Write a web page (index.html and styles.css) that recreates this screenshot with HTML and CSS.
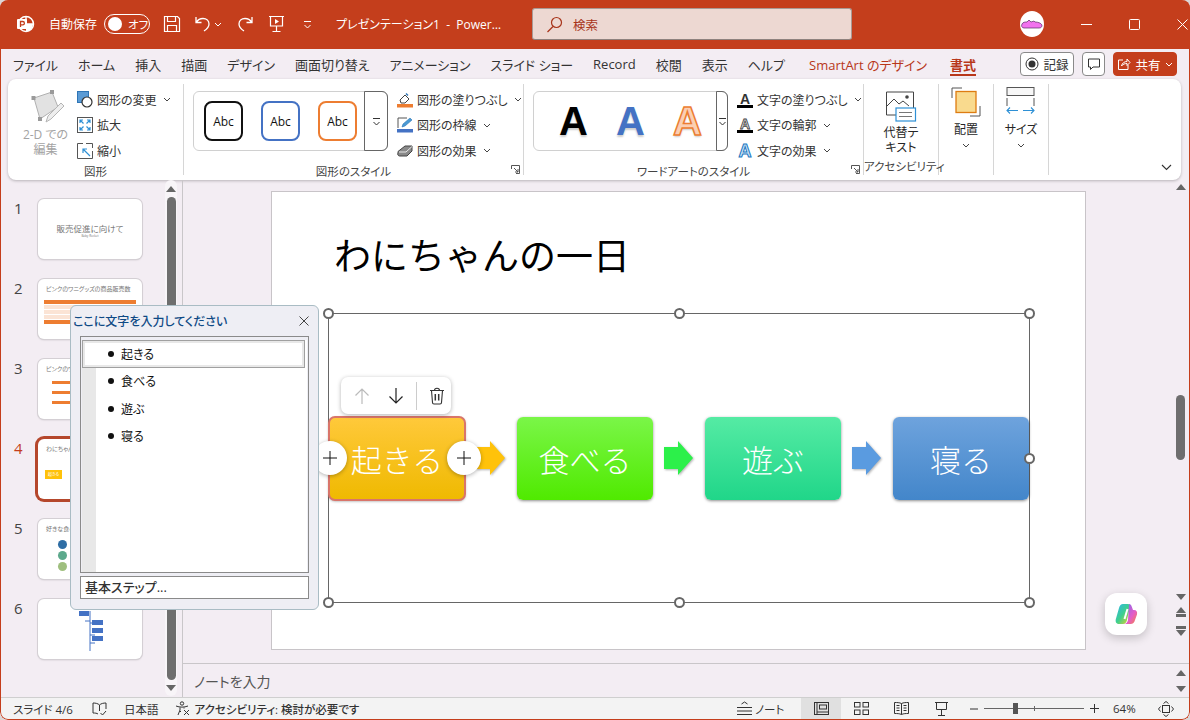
FILE: index.html
```html
<!DOCTYPE html>
<html lang="ja">
<head>
<meta charset="utf-8">
<title>PowerPoint</title>
<link rel="stylesheet" href="styles.css">
</head>
<body>
<div class="app">
  <header class="titlebar">
    <svg class="logo" width="20" height="20" viewBox="0 0 20 20"><circle cx="11" cy="10" r="7.5" fill="none" stroke="#fff" stroke-width="1.5"/><path d="M11 2.5V10h7.5" fill="none" stroke="#fff" stroke-width="1.5"/><path d="M11 10h7a7.5 7.5 0 0 1-7 7.5z" fill="#fff"/><rect x="2" y="5" width="10" height="10" rx="1" fill="#fff"/><path d="M5.5 13V7.5h2.2a1.6 1.6 0 0 1 0 3.4H5.5" fill="none" stroke="#c43e1c" stroke-width="1.3"/></svg>
    <span class="autosave">自動保存</span>
    <span class="toggle"><i class="knob"></i><span>オフ</span></span>
    <svg class="qat save" width="18" height="18" viewBox="0 0 18 18" fill="none" stroke="#fff" stroke-width="1.2"><path d="M1.5 1.5h13l2 2v13h-15zM4.5 1.5v5h8v-5M4.5 16.5v-6h9v6"/></svg>
    <svg class="qat undo" width="18" height="18" viewBox="0 0 18 18" fill="none" stroke="#fff" stroke-width="1.3"><path d="M2 2v5.500h5.500M2.300 7.300C4 4.500 6 3.500 9 3.500c3.500 0 6 2.300 6 5.500 0 2.500-2 5-5 7"/></svg>
    <svg class="chev undochev" width="8" height="5" viewBox="0 0 8 5" fill="none" stroke="#fff"><path d="M1 1l3 3 3-3"/></svg>
    <svg class="qat redo" width="18" height="18" viewBox="0 0 18 18" fill="none" stroke="#fff" stroke-width="1.3"><path d="M16 2v5.500h-5.500M15.700 7.300C14 4.500 12 3.500 9 3.500c-3.500 0-6 2.300-6 5.500 0 2.500 2 5 5 7"/></svg>
    <svg class="qat present" width="18" height="18" viewBox="0 0 18 18" fill="none" stroke="#fff" stroke-width="1.2"><path d="M1 1.500h15M2.500 1.500v9.500h12V1.500M8.500 11v5M4.500 16.500h8"/><path d="M7 4l4 2.500L7 9z" fill="#fff" stroke="none"/></svg>
    <svg class="qatmore" width="9" height="9" viewBox="0 0 9 9" fill="none" stroke="#fff"><path d="M1 1.500h7M1.500 5l3 3 3-3"/></svg>
    <span class="doc">プレゼンテーション1 &nbsp;-&nbsp; Power…</span>
    <div class="search">
      <svg width="17" height="17" viewBox="0 0 17 17" fill="none" stroke="#a8341a" stroke-width="1.2"><circle cx="10.500" cy="6.500" r="5"/><path d="M7 10.500L1.500 16"/></svg>
      <span>検索</span>
    </div>
    <div class="avatar"><svg width="22" height="10" viewBox="0 0 22 10"><path d="M1 5c1-2 3-2 5-2l2-2 2 2 3-1 1 1c3 0 6 1 7 3 0 2-1 3-3 3H3C1 9 0 7 1 5z" fill="#f272ee" stroke="#5a2a66" stroke-width=".7"/></svg></div>
    <svg class="win wmin" width="11" height="11" viewBox="0 0 11 11" stroke="#fff"><path d="M0 5.500h11"/></svg>
    <svg class="win wmax" width="11" height="11" viewBox="0 0 11 11" fill="none" stroke="#fff"><rect x=".5" y=".5" width="10" height="10" rx="1"/></svg>
    <svg class="win wclose" width="11" height="11" viewBox="0 0 11 11" stroke="#fff"><path d="M.5.5l10 10M10.500.5l-10 10"/></svg>
  </header>

  <nav class="tabs">
    <span>ファイル</span><span>ホーム</span><span>挿入</span><span>描画</span><span>デザイン</span><span>画面切り替え</span><span>アニメーション</span><span>スライド ショー</span><span class="latin">Record</span><span>校閲</span><span>表示</span><span>ヘルプ</span>
    <span class="tab-red">SmartArt のデザイン</span><span class="tab-active">書式</span>
    <div class="tab-actions">
      <button class="tbtn rec"><svg width="14" height="14" viewBox="0 0 14 14"><circle cx="7" cy="7" r="6" fill="none" stroke="#333"/><circle cx="7" cy="7" r="3.500" fill="#333"/></svg>記録</button>
      <button class="tbtn cmt"><svg width="14" height="14" viewBox="0 0 14 14" fill="none" stroke="#333"><path d="M1.500 2h11v8H6l-2.500 2.500V10h-2z"/></svg></button>
      <button class="tbtn share"><svg width="14" height="14" viewBox="0 0 14 14" fill="none" stroke="#fff"><path d="M6 3H1.500v9.500h9.500V8M4.500 9c.5-3 3-4.500 5.500-4.500V2L13 5.500 10 8.500V6.500C8 6.500 6 7 4.500 9z"/></svg>共有<svg width="8" height="5" viewBox="0 0 8 5" fill="none" stroke="#fff"><path d="M1 1l3 3 3-3"/></svg></button>
    </div>
  </nav>

  <section class="ribbon">
    <div class="group g1">
      <div class="gbody">
        <div class="big disabled edit2d">
          <svg width="36" height="36" viewBox="0 0 36 36"><path d="M6 9l18-6 6 15-18 12z" fill="#e2e2e2" stroke="#b0b0b0"/><g fill="#9a9a9a"><rect x="3.500" y="7" width="4" height="4"/><rect x="22" y="1" width="4" height="4"/><rect x="10" y="28" width="4" height="4"/></g><path d="M18 33l2-6 13-13 3 3-13 13z" fill="#eee" stroke="#b5b5b5"/></svg>
          <span>2-D での<br>編集</span>
        </div>
        <div class="rows">
          <div class="row"><svg width="16" height="17" viewBox="0 0 16 17"><rect x=".5" y=".5" width="11" height="11" fill="#5b9bd5" stroke="#2e75b6"/><circle cx="10" cy="11" r="5" fill="#fff" stroke="#333" stroke-width="1.200"/></svg><span>図形の変更</span><svg class="chev" width="8" height="5" viewBox="0 0 8 5" fill="none" stroke="#444"><path d="M1 1l3 3 3-3"/></svg></div>
          <div class="row"><svg width="16" height="16" viewBox="0 0 16 16" fill="none"><rect x=".5" y=".5" width="15" height="15" stroke="#555"/><path d="M3 3l3.500 3.500M13 3L9.500 6.500M3 13l3.500-3.500M13 13L9.500 9.500M3 6V3h3M10 3h3v3M3 10v3h3M13 10v3h-3" stroke="#2e90d5" stroke-width="1.200"/></svg><span>拡大</span></div>
          <div class="row"><svg width="16" height="16" viewBox="0 0 16 16" fill="none"><path d="M6 .5H.5v15h15V8M9 .5h6.500V5" stroke="#555"/><path d="M13 13L6 6M6 10V6h4" stroke="#2e90d5" stroke-width="1.200"/></svg><span>縮小</span></div>
        </div>
      </div>
      <div class="glabel">図形</div>
    </div>

    <div class="group g2">
      <div class="gbody">
        <div class="gallery">
          <div class="items shape-items"><span class="abc a-black">Abc</span><span class="abc a-blue">Abc</span><span class="abc a-orange">Abc</span></div>
          <div class="more"><svg width="9" height="9" viewBox="0 0 9 9" fill="none" stroke="#333"><path d="M1 1.500h7M1.500 5l3 3 3-3"/></svg></div>
        </div>
        <div class="rows">
          <div class="row"><svg width="16" height="16" viewBox="0 0 16 16"><path d="M3 8l5-5 4 4-4 4H4z" fill="#fff" stroke="#444"/><path d="M9 1.500l2 2" stroke="#2e75b6" stroke-width="1.500"/><rect y="12" width="16" height="3.500" fill="#ed7d31"/></svg><span>図形の塗りつぶし</span><svg class="chev" width="8" height="5" viewBox="0 0 8 5" fill="none" stroke="#444"><path d="M1 1l3 3 3-3"/></svg></div>
          <div class="row"><svg width="16" height="16" viewBox="0 0 16 16"><path d="M1 11V1h9" fill="none" stroke="#555"/><path d="M5 10l1-3 7-6 2 2-7 6z" fill="#4a9ad4" stroke="#2e75b6" stroke-width=".6"/><rect y="12" width="16" height="3.500" fill="#4472c4"/></svg><span>図形の枠線</span><svg class="chev" width="8" height="5" viewBox="0 0 8 5" fill="none" stroke="#444"><path d="M1 1l3 3 3-3"/></svg></div>
          <div class="row"><svg width="16" height="16" viewBox="0 0 16 16"><path d="M1 8.500L8 3h7v5l-5 5H2.500a2 2 0 0 1-1.500-3z" fill="#8a8a8a" stroke="#444"/><path d="M2 9h7l6-5.500" fill="none" stroke="#e8e8e8"/></svg><span>図形の効果</span><svg class="chev" width="8" height="5" viewBox="0 0 8 5" fill="none" stroke="#444"><path d="M1 1l3 3 3-3"/></svg></div>
        </div>
      </div>
      <div class="glabel">図形のスタイル</div>
      <svg class="launcher" width="9" height="9" viewBox="0 0 9 9" fill="none" stroke="#555"><path d="M.5 4V.5h8v8H5M3 3l4 4M7 4v3H4"/></svg>
    </div>

    <div class="group g3">
      <div class="gbody">
        <div class="gallery">
          <div class="items wa-items"><span class="wa wa-black">A</span><span class="wa wa-blue">A</span><span class="wa wa-orange">A</span></div>
          <div class="more"><svg width="9" height="9" viewBox="0 0 9 9" fill="none" stroke="#333"><path d="M1 1.500h7M1.500 5l3 3 3-3"/></svg></div>
        </div>
        <div class="rows">
          <div class="row"><span class="ta ta-plain">A</span><span>文字の塗りつぶし</span><svg class="chev" width="8" height="5" viewBox="0 0 8 5" fill="none" stroke="#444"><path d="M1 1l3 3 3-3"/></svg></div>
          <div class="row"><span class="ta ta-outline">A</span><span>文字の輪郭</span><svg class="chev" width="8" height="5" viewBox="0 0 8 5" fill="none" stroke="#444"><path d="M1 1l3 3 3-3"/></svg></div>
          <div class="row"><span class="ta ta-effect">A</span><span>文字の効果</span><svg class="chev" width="8" height="5" viewBox="0 0 8 5" fill="none" stroke="#444"><path d="M1 1l3 3 3-3"/></svg></div>
        </div>
      </div>
      <div class="glabel">ワードアートのスタイル</div>
      <svg class="launcher" width="9" height="9" viewBox="0 0 9 9" fill="none" stroke="#555"><path d="M.5 4V.5h8v8H5M3 3l4 4M7 4v3H4"/></svg>
    </div>

    <div class="group g4">
      <div class="gbody">
        <div class="big alt">
          <svg width="32" height="32" viewBox="0 0 32 32" fill="none"><path d="M11 24H1.500V1h27v17" stroke="#444"/><path d="M2 15l7-7 5 5 4-3 6 5" stroke="#444"/><circle cx="22" cy="6" r="1.800" fill="#444"/><rect x="11" y="17" width="19.500" height="13" fill="#fff" stroke="#2e90d5" stroke-width="1.200"/><path d="M14 21.500h13M14 25.500h13" stroke="#777"/></svg>
          <span>代替テ<br>キスト</span>
        </div>
      </div>
      <div class="glabel">アクセシビリティ</div>
    </div>

    <div class="group g5">
      <div class="gbody">
        <div class="big arrange">
          <svg width="30" height="30" viewBox="0 0 30 30" fill="none"><path d="M1 11V1h10M29 19v10h-10" stroke="#555"/><rect x="5" y="4.500" width="20" height="21" fill="#f9da8e" stroke="#dd7c12" stroke-width="1.300"/></svg>
          <span>配置</span>
          <svg class="chev" width="8" height="5" viewBox="0 0 8 5" fill="none" stroke="#444"><path d="M1 1l3 3 3-3"/></svg>
        </div>
      </div>
      <div class="glabel"></div>
    </div>

    <div class="group g6">
      <div class="gbody">
        <div class="big arrange">
          <svg width="30" height="30" viewBox="0 0 30 30" fill="none"><rect x="1" y=".5" width="27" height="8" fill="#f7f7f7" stroke="#555"/><path d="M1 11v8M28 11v8" stroke="#555"/><path d="M1 23.500h11M4 20.500l-3 3 3 3M28 23.500H17M25 20.500l3 3-3 3" stroke="#2e90d5" stroke-width="1.100"/></svg>
          <span>サイズ</span>
          <svg class="chev" width="8" height="5" viewBox="0 0 8 5" fill="none" stroke="#444"><path d="M1 1l3 3 3-3"/></svg>
        </div>
      </div>
      <div class="glabel"></div>
    </div>

    <svg class="collapse" width="11" height="7" viewBox="0 0 11 7" fill="none" stroke="#333" stroke-width="1.100"><path d="M1 1l4.500 4.500L10 1"/></svg>
  </section>

  <main class="main">
    <aside class="thumbs">
      <ol class="thumb-list">
        <li class="tl"><span class="num">1</span>
          <div class="thumb t1"><b>販売促進に向けて</b><i>Baby Rocket</i></div></li>
        <li class="tl"><span class="num">2</span>
          <div class="thumb t2"><b>ピンクのワニグッズの商品販売数</b><div class="mini-table"><i class="mt-head"></i><i></i><i></i><i class="mt-alt"></i><i class="mt-foot"></i></div></div></li>
        <li class="tl"><span class="num">3</span>
          <div class="thumb t3"><b>ピンクのワニグッズ</b><div class="mini-bars"><i></i><i></i><i></i></div></div></li>
        <li class="tl current"><span class="num">4</span>
          <div class="thumb t4"><b>わにちゃんの一日</b><div class="mini-node">起きる</div></div></li>
        <li class="tl"><span class="num">5</span>
          <div class="thumb t5"><b>好きな食べ物</b><div class="mini-dots"><i class="d1"></i><i class="d2"></i><i class="d3"></i></div></div></li>
        <li class="tl"><span class="num">6</span>
          <div class="thumb t6">
            <svg width="104" height="60" viewBox="0 0 104 60"><path d="M52 12V52M52 22h-5M52 24h5M52 36h5M52 44h5" stroke="#4472c4" fill="none"/><g fill="#4472c4"><rect x="47" y="2" width="11" height="5"/><rect x="41" y="12" width="10" height="5"/><rect x="54" y="21" width="11" height="5"/><rect x="54" y="29" width="11" height="5"/><rect x="54" y="37" width="11" height="5"/></g></svg>
          </div></li>
      </ol>
      <div class="vscroll left-scroll">
        <span class="tri up"></span><span class="thumbbar"></span><span class="tri down"></span>
      </div>
    </aside>

    <div class="editor">
      <div class="stage">
        <div class="canvas">
          <div class="slide">
            <h1 class="slide-title">わにちゃんの一日</h1>
            <div class="smartart">
              <div class="node n1">起きる</div>
              <svg class="arrow" width="30" height="34" viewBox="0 0 30 34"><path d="M0 6h14V0l15 17-15 17v-6H0z" fill="#ffc20a"/></svg>
              <div class="node n2">食べる</div>
              <svg class="arrow" width="30" height="34" viewBox="0 0 30 34"><path d="M0 6h14V0l15 17-15 17v-6H0z" fill="#2cf04a"/></svg>
              <div class="node n3">遊ぶ</div>
              <svg class="arrow" width="30" height="34" viewBox="0 0 30 34"><path d="M0 6h14V0l15 17-15 17v-6H0z" fill="#5a9be0"/></svg>
              <div class="node n4">寝る</div>
              <span class="handle h-tl"></span><span class="handle h-tc"></span><span class="handle h-tr"></span><span class="handle h-mr"></span><span class="handle h-bl"></span><span class="handle h-bc"></span><span class="handle h-br"></span>
              <div class="plus plus-l"><svg width="16" height="16" viewBox="0 0 16 16" stroke="#111"><path d="M8 1v14M1 8h14"/></svg></div>
              <div class="plus plus-r"><svg width="16" height="16" viewBox="0 0 16 16" stroke="#111"><path d="M8 1v14M1 8h14"/></svg></div>
              <div class="float-tools">
                <svg width="16" height="18" viewBox="0 0 16 18" fill="none" stroke="#bbb" stroke-width="1.200"><path d="M8 17V2M1.500 8.500L8 2l6.500 6.500"/></svg>
                <svg width="16" height="18" viewBox="0 0 16 18" fill="none" stroke="#222" stroke-width="1.200"><path d="M8 1v15M1.500 9.500L8 16l6.500-6.500"/></svg>
                <i class="tsep"></i>
                <svg width="16" height="18" viewBox="0 0 16 18" fill="none" stroke="#333" stroke-width="1.100"><path d="M1 3.500h14M5.500 3.500c0-3 5-3 5 0M2.500 3.500l1 12c0 1 .7 1.500 1.500 1.500h6c.8 0 1.500-.5 1.500-1.500l1-12"/><path d="M6.300 7v6.500M9.700 7v6.500" stroke-width="1.500"/></svg>
              </div>
            </div>
          </div>
          <button class="copilot"><svg width="24" height="24" viewBox="0 0 24 24"><defs><linearGradient id="cpA" x1="0" y1="0" x2="1" y2="1"><stop offset="0" stop-color="#2db5f0"/><stop offset=".5" stop-color="#3ecf8e"/><stop offset="1" stop-color="#f5d020"/></linearGradient><linearGradient id="cpB" x1="0" y1="0" x2="1" y2="1"><stop offset="0" stop-color="#7a6cf0"/><stop offset=".6" stop-color="#e45bc8"/><stop offset="1" stop-color="#f6843c"/></linearGradient></defs><path d="M9 2h5c1.500 0 2 1 2.300 2L13 18c-.5 2-1.500 4-4 4H5C2 22 1 19.500 2 16.500L5 6c.7-2.500 2-4 4-4z" fill="url(#cpA)"/><path d="M15 2c1.500 0 2.300 1 2.700 2.500L19 8h1c2.500 0 3.500 2 3 4.500L21 18c-.7 2.500-2 4-4.500 4H10c2 0 3.300-1.500 4-4z" fill="url(#cpB)"/><path d="M13.500 7l-3 10" stroke="#fff" stroke-width="2"/></svg></button>
        </div>
        <div class="vscroll right-scroll">
          <span class="tri up"></span><span class="track"><span class="thumbbar short"></span></span><span class="tri down"></span>
          <span class="dbl"><span class="tri up"></span><i></i></span><span class="dbl"><i></i><span class="tri down"></span></span>
        </div>
      </div>
      <div class="notes">
        <span>ノートを入力</span>
        <div class="vscroll notes-scroll"><span class="tri up"></span><span class="tri down"></span></div>
      </div>
    </div>

    <div class="textpane">
      <div class="tp-head"><span>ここに文字を入力してください</span>
        <svg width="10" height="10" viewBox="0 0 10 10" stroke="#444"><path d="M.5.500l9 9M9.500.500l-9 9"/></svg>
      </div>
      <ul class="tp-list">
        <li class="sel">起きる</li>
        <li>食べる</li>
        <li>遊ぶ</li>
        <li>寝る</li>
      </ul>
      <div class="tp-foot">基本ステップ...</div>
    </div>
  </main>

  <footer class="status">
    <span>スライド 4/6</span>
    <svg class="st-book" width="15" height="14" viewBox="0 0 15 14" fill="none" stroke="#333"><path d="M7.500 3C6 1.500 3.500 1 1 1v10c2 0 4 .2 5 1M7.500 3c1.500-1.500 4-2 6.500-2v6M7.500 3v6M8.500 11l2 2 3.500-4"/></svg>
    <span class="st-lang">日本語</span>
    <svg class="st-acc" width="15" height="15" viewBox="0 0 15 15" fill="none" stroke="#333"><circle cx="7" cy="2.500" r="1.700"/><path d="M1 5c4 1.500 8 1.500 12 0M5 6.500V9l-2 5M9 6.500v1M6 10l-1 1M9 9l5 5M14 9l-5 5"/></svg>
    <span class="st-msg">アクセシビリティ: 検討が必要です</span>
    <div class="st-right">
      <svg width="17" height="15" viewBox="0 0 17 15" fill="none" stroke="#333"><path d="M5.500 3l3-2 3 2M1 6.500h15M1 10h15M1 13.500h15"/></svg>
      <span class="st-note">ノート</span>
      <div class="view on"><svg width="15" height="13" viewBox="0 0 15 13" fill="none" stroke="#333"><rect x=".5" y=".5" width="14" height="12"/><path d="M3 .5v12M3 10h11"/><rect x="5.500" y="3" width="7" height="4"/></svg></div>
      <div class="view"><svg width="15" height="13" viewBox="0 0 15 13" fill="none" stroke="#333"><rect x=".5" y=".5" width="5.500" height="4.500"/><rect x="9" y=".5" width="5.500" height="4.500"/><rect x=".5" y="8" width="5.500" height="4.500"/><rect x="9" y="8" width="5.500" height="4.500"/></svg></div>
      <div class="view"><svg width="15" height="13" viewBox="0 0 15 13" fill="none" stroke="#333"><path d="M7.500 1.500C5.500.5 3 .5.500.5v11c2.500 0 5 0 7 1 2-1 4.500-1 7-1V.5c-2.500 0-5 0-7 1zM7.500 1.500v11M2.500 3.500h3M2.500 6h3M2.500 8.500h3M9.500 3.500h3M9.500 6h3M9.500 8.500h3"/></svg></div>
      <div class="view"><svg width="15" height="14" viewBox="0 0 15 14" fill="none" stroke="#333"><path d="M1 .5h13M2.500.5v7h10v-7M7.500 7.500v6M4 13.500h7"/></svg></div>
      <div class="zoomer">
        <svg width="8" height="2" viewBox="0 0 8 2" stroke="#333"><path d="M0 1h8"/></svg>
        <div class="slider"><i class="sl-tick"></i><i class="sl-knob"></i></div>
        <svg width="9" height="9" viewBox="0 0 9 9" stroke="#333"><path d="M4.500 0v9M0 4.500h9"/></svg>
      </div>
      <span class="st-zoom">64%</span>
      <svg class="st-fit" width="16" height="16" viewBox="0 0 16 16" fill="none" stroke="#333"><rect x="4.500" y="4.500" width="7" height="7"/><path d="M2.500 5.500L.5 8l2 2.500M13.500 5.500l2 2.500-2 2.500M5.500 2.500L8 .5l2.500 2M5.500 13.500l2.500 2 2.500-2"/></svg>
    </div>
  </footer>
</div>
</body>
</html>
```

FILE: styles.css
```css
* { box-sizing: border-box; }
html, body { margin: 0; padding: 0; }
body {
  width: 1190px; height: 720px; overflow: hidden; background: #dcd6d6;
  font-family: "Open Sans", "Noto Sans CJK JP", sans-serif;
  font-feature-settings: "palt"; color: #262626; font-size: 12px;
}
.app {
  position: relative; width: 1190px; height: 720px; display: flex; flex-direction: column;
  background: #f3edf3; border-radius: 8px; overflow: hidden;
}
.app::after {
  content: ""; position: absolute; inset: 0; border: 1px solid #c43e1c;
  border-top: 0; border-radius: 8px; pointer-events: none;
}
svg { display: block; flex: none; }

/* title bar */
.titlebar { height: 49px; flex: none; background: #c43e1c; display: flex; align-items: center; color: #fff; padding-bottom: 1px; }
.logo { margin-left: 15px; }
.autosave { margin-left: 14px; width: 48px; white-space: nowrap; font-size: 12px; }
.toggle { margin-left: 7px; width: 46px; height: 20px; border: 1px solid #fff; border-radius: 10px; display: flex; align-items: center; padding-left: 3px; gap: 6px; font-size: 11.5px; white-space: nowrap; }
.knob { width: 14px; height: 14px; background: #fff; border-radius: 50%; flex: none; }
.save { margin-left: 13px; }
.undo { margin-left: 13px; }
.undochev { margin-left: 2px; margin-top: 0; }
.redo { margin-left: 14px; }
.present { margin-left: 14px; }
.qatmore { margin-left: 17px; }
.doc { margin-left: 24px; width: 150px; font-size: 12px; white-space: nowrap; }
.search { margin-left: 46px; width: 320px; height: 32px; background: #edd8d2; border: 1px solid #a99a95; border-bottom-color: #8f827e; border-radius: 3px; display: flex; align-items: center; padding-left: 13px; gap: 10px; color: #a8341a; font-size: 12.5px; }
.avatar { margin-left: 168px; width: 24px; height: 26px; border-radius: 50%; background: #fff; display: flex; align-items: center; justify-content: center; }
.avatar svg { margin: 0 -1px; }
.wmin { margin-left: 37px; }
.wmax { margin-left: 37px; }
.wclose { margin-left: 37px; }

/* tabs */
.tabs { height: 30px; flex: none; display: flex; align-items: center; padding-left: 13px; gap: 20px; font-size: 13px; white-space: nowrap; color: #333; }
.tab-red { color: #b8371a; margin-left: 4px; }
.tab-active { color: #b8371a; font-weight: 700; position: relative; margin-left: 3px; }
.tab-active::after { content: ""; position: absolute; left: 0; right: 0; bottom: -2px; height: 2px; background: #b8371a; }
.tab-actions { margin-left: auto; display: flex; gap: 8px; padding-right: 13px; }
.tbtn { height: 24px; border: 1px solid #8a8a8a; border-radius: 4px; background: #fff; display: flex; align-items: center; justify-content: center; gap: 4px; font: inherit; font-size: 12.5px; color: #333; padding: 0; }
.rec { width: 54px; }
.cmt { width: 23px; }
.share { width: 64px; background: #c43e1c; border-color: #c43e1c; color: #fff; }

/* ribbon */
.ribbon { position: relative; flex: none; height: 101px; margin: 0 9px 0 8px; background: #fff; border-radius: 8px; box-shadow: 0 1px 3px rgba(0,0,0,.25); display: flex; padding-top: 5px; }
.group { position: relative; display: flex; flex-direction: column; border-right: 1px solid #d6d6d6; height: 91px; flex: none; }
.gbody { flex: 1; display: flex; }
.glabel { height: 16px; line-height: 16px; text-align: center; font-size: 11.5px; color: #444; white-space: nowrap; margin-bottom: 0; }
.launcher { position: absolute; right: 3px; bottom: 1px; }
.g1 { width: 176px; } .g2 { width: 340px; } .g3 { width: 340px; } .g4 { width: 75px; } .g5 { width: 55px; } .g6 { width: 55px; }
.big { display: flex; flex-direction: column; align-items: center; text-align: center; line-height: 15px; font-size: 12px; }
.edit2d { width: 69px; padding: 5px 0 0 6px; gap: 2px; }
.disabled { color: #a3a3a3; }
.rows { display: flex; flex-direction: column; padding-top: 3px; }
.g1 .rows { margin-left: 0; }
.row { display: flex; align-items: center; height: 25.5px; gap: 4px; white-space: nowrap; font-size: 12px; color: #333; }
.row .chev { margin-left: 2px; }
.gallery { margin: 7px 9px 0 9px; width: 195px; height: 60px; border: 1px solid #d0d0d0; border-radius: 6px; display: flex; }
.items { flex: 1; display: flex; align-items: center; }
.shape-items { padding-left: 10px; gap: 18px; }
.abc { width: 39px; height: 40px; border: 2px solid; border-radius: 8px; display: flex; align-items: center; justify-content: center; font-size: 12px; color: #111; }
.a-black { border-color: #111; } .a-blue { border-color: #4472c4; } .a-orange { border-color: #ed7d31; }
.more { width: 24px; margin: -1px -1px -1px 0; border: 1px solid #666; border-radius: 0 6px 6px 0; display: flex; align-items: center; justify-content: center; }
.wa-items { padding-left: 11px; }
.wa { width: 57px; text-align: center; font: 700 40px/1 "Liberation Sans", sans-serif; text-shadow: 0 2px 2px rgba(0,0,0,.2); }
.wa-items .wa { margin-right: 0; }
.wa-black { color: #000; }
.wa-blue { color: #4472c4; }
.wa-orange { color: #fbcfb3; -webkit-text-stroke: 1.5px #ed7d31; }
.ta { width: 16px; height: 16px; font: 700 14px/14px "Liberation Sans", sans-serif; text-align: center; color: #333; border-bottom: 3px solid #000; overflow: hidden; flex: none; }
.ta-outline { color: #ddd; -webkit-text-stroke: .8px #444; }
.ta-effect { border-bottom: 0; font-size: 18px; line-height: 16px; color: #cfe6f6; -webkit-text-stroke: 1px #1a78c2; }
.alt { width: 100%; padding-top: 7px; }
.alt svg { margin-bottom: 2px; }
.alt span { line-height: 15px; }
.arrange { width: 100%; padding-top: 3px; gap: 3px; }
.arrange span { line-height: 15px; margin-top: 2px; }
.arrange .chev { margin-top: 3px; }
.collapse { position: absolute; right: 9px; bottom: 9px; }

/* main */
.main { position: relative; flex: 1; display: flex; min-height: 0; }
.thumbs { width: 183px; flex: none; position: relative; border-right: 1px solid #c9c6c9; display: flex; }
.thumb-list { list-style: none; margin: 0; padding: 19px 0 0; width: 164px; display: flex; flex-direction: column; gap: 20px; }
.tl { display: flex; height: 60px; }
.num { width: 38px; padding: 0 0 0 14px; font-size: 15px; line-height: 18px; color: #444; }
.current .num { color: #c43e1c; }
.thumb { position: relative; width: 104px; height: 60px; background: #fff; border-radius: 6px; box-shadow: 0 0 0 1px #d4cfd4, 0 1px 2px rgba(0,0,0,.2); overflow: hidden; color: #777; }
.current .thumb { box-shadow: 0 0 0 3px #b5472c; }
.thumb b { display: block; font-weight: 400; white-space: nowrap; }
.t1 b { font-size: 8.5px; text-align: center; margin-top: 23px; }
.t1 i { display: block; font-style: normal; font-size: 3px; text-align: center; }
.t2 b, .t3 b, .t4 b, .t5 b { font-size: 6px; margin: 5px 0 0 8px; }
.mini-table { margin: 6px 6px 0; display: flex; flex-direction: column; }
.mini-table i { height: 5px; background: #fbe4d5; border-top: 1px solid #fff; }
.mt-head, .mt-foot { background: #ed7d31 !important; }
.mini-bars { margin: 8px 14px 0; display: flex; flex-direction: column; gap: 7px; }
.mini-bars i { height: 3px; background: #ed7d31; }
.mini-node { margin: 17px 0 0 7px; width: 17px; height: 9px; background: #ffc20a; color: #fff; font-size: 4px; line-height: 9px; text-align: center; }
.mini-dots { margin: 7px 0 0 20px; display: flex; flex-direction: column; gap: 2px; }
.mini-dots i { width: 9px; height: 9px; border-radius: 50%; }
.d1 { background: #2e6da4; } .d2 { background: #5da98c; } .d3 { background: #9fbf7e; }

.vscroll { display: flex; flex-direction: column; align-items: center; }
.tri { width: 0; height: 0; border-left: 5px solid transparent; border-right: 5px solid transparent; flex: none; }
.tri.up { border-bottom: 6px solid #666; }
.tri.down { border-top: 6px solid #666; }
.left-scroll { width: 12px; margin-left: 1px; padding-top: 6px; background: #f8f5f8; height: 516px; border-radius: 6px; }
.left-scroll .thumbbar { width: 9px; height: 483px; margin: 5px 0 5px; background: #6e6e6e; border-radius: 5px; }

.editor { flex: 1; display: flex; flex-direction: column; min-width: 0; }
.stage { flex: 1; display: flex; min-height: 0; }
.canvas { position: relative; flex: 1; padding: 11px 0 0 88px; }
.slide { position: relative; width: 815px; height: 459px; background: #fff; border: 1px solid #c8c4c8; }
.slide-title { position: absolute; left: 62px; top: 37px; margin: 0; font-size: 37px; font-weight: 400; line-height: 50px; color: #000; white-space: nowrap; font-family: "Noto Sans CJK JP", sans-serif; font-feature-settings: normal; }
.smartart { position: absolute; left: 56px; top: 121px; width: 702px; height: 290px; border: 1px solid #666; display: flex; align-items: center; justify-content: space-between; }
.node { width: 136px; height: 83px; border-radius: 6px; display: flex; align-items: center; justify-content: center; color: #fff; font-size: 31px; box-shadow: 0 1px 3px rgba(0,0,0,.45); font-family: "Noto Sans CJK JP", sans-serif; font-weight: 300; font-feature-settings: normal; }
.n1 { background: linear-gradient(#ffc93b, #efb900); outline: 2px solid #d9756a; outline-offset: -1px; }
.n2 { background: linear-gradient(#7af648, #50ea00); }
.n3 { background: linear-gradient(#55eba4, #20d689); }
.n4 { background: linear-gradient(#6ea3dd, #4386ca); }
.arrow { filter: drop-shadow(1px 1px 1px rgba(0,0,0,.3)); }
.handle { position: absolute; width: 11px; height: 11px; border: 2px solid #666; background: #fff; border-radius: 50%; }
.h-tl { left: -6px; top: -6px; } .h-tc { left: 345px; top: -6px; } .h-tr { right: -6px; top: -6px; }
.h-mr { right: -6px; top: 139px; }
.h-bl { left: -6px; bottom: -6px; } .h-bc { left: 345px; bottom: -6px; } .h-br { right: -6px; bottom: -6px; }
.plus { position: absolute; top: 127px; width: 34px; height: 34px; border-radius: 50%; background: #fff; box-shadow: 0 1px 4px rgba(0,0,0,.3); display: flex; align-items: center; justify-content: center; }
.plus-l { left: -16px; } .plus-r { left: 118px; }
.float-tools { position: absolute; left: 12px; top: 63px; width: 110px; height: 37px; background: #fff; border-radius: 7px; box-shadow: 0 1px 4px rgba(0,0,0,.3); display: flex; align-items: center; padding-left: 13px; gap: 18px; }
.tsep { width: 1px; height: 28px; background: #ccc; margin: 0 -6px 0 -6px; flex: none; }
.copilot { position: absolute; right: 25px; top: 413px; width: 42px; height: 42px; padding: 0; border: 0; border-radius: 12px; background: #fff; box-shadow: 0 3px 10px rgba(0,0,0,.2); display: flex; align-items: center; justify-content: center; }
.right-scroll { width: 17px; margin-right: 1px; padding-top: 4px; flex: none; }
.right-scroll .track { flex: none; height: 404px; width: 100%; display: flex; flex-direction: column; align-items: center; padding-top: 205px; }
.thumbbar.short { width: 9px; height: 65px; background: #6e6e6e; border-radius: 5px; }
.right-scroll .dbl { display: flex; flex-direction: column; align-items: center; margin-top: 7px; }
.dbl i { width: 10px; height: 3px; background: #666; margin: 1px 0; }
.notes { height: 34px; flex: none; border-top: 1px solid #c9c6c9; display: flex; align-items: center; justify-content: space-between; padding-left: 11px; font-size: 14px; color: #555; }
.notes-scroll { width: 17px; margin-right: 1px; gap: 10px; }

/* text pane */
.textpane { position: absolute; left: 70px; top: 125px; width: 249px; height: 305px; background: #eeeef4; border: 1px solid #a9bcc4; border-radius: 6px; display: flex; flex-direction: column; padding: 0 9px 10px; }
.tp-head { height: 30px; flex: none; display: flex; align-items: center; justify-content: space-between; margin-left: -7px; margin-right: 0; color: #0f4a85; font-size: 12px; font-weight: 500; white-space: nowrap; }
.tp-head svg { margin-top: 0; }
.tp-list { flex: 1; margin: 0; padding: 3px 1px 0; list-style: none; background: linear-gradient(90deg, #e8e8e8 14px, #fff 14px); background-origin: content-box; background-repeat: no-repeat; border: 1px solid #8a8a8a; box-shadow: inset 0 0 0 0 #fff; }
.tp-list li { height: 27.5px; padding-left: 39px; display: flex; align-items: center; position: relative; font-size: 12px; color: #111; }
.tp-list li::before { content: ""; position: absolute; left: 26px; top: 50%; width: 6px; height: 6px; margin-top: -3px; border-radius: 50%; background: #111; }
.tp-list li.sel { margin-right: 2px; background: #fff; border: 1px solid #a0a0a0; box-shadow: inset 2px 2px 0 #e8e8e8, inset -2px -2px 0 #e8e8e8; padding-left: 38px; }
.tp-list li.sel::before { left: 25px; }
.tp-foot { height: 23px; flex: none; margin-top: 3px; background: #fff; border: 1px solid #8a8a8a; padding-left: 4px; line-height: 21px; font-size: 13px; font-weight: 500; color: #333; }

/* status */
.status { height: 23px; flex: none; background: #f3f3f3; border-top: 1px solid #cfcfcf; padding: 0 0 1px 13px; display: flex; align-items: center; font-size: 11.5px; color: #333; white-space: nowrap; }
.st-book { margin-left: 19px; }
.st-lang { margin-left: 17px; }
.st-acc { margin-left: 17px; }
.st-msg { margin-left: 4px; font-weight: 500; }
.st-right { margin-left: auto; display: flex; align-items: center; align-self: stretch; padding-right: 16px; }
.st-note { margin: 0 19px 0 2px; width: 27px; }
.view { width: 40px; height: 100%; display: flex; align-items: center; justify-content: center; }
.view.on { background: #e0e0e0; }
.zoomer { display: flex; align-items: center; gap: 6px; margin-left: 9px; }
.slider { position: relative; width: 100px; height: 1px; background: #666; }
.sl-tick { position: absolute; left: 50px; top: -2px; width: 1px; height: 5px; background: #666; }
.sl-knob { position: absolute; left: 29px; top: -5px; width: 5px; height: 11px; background: #555; }
.st-zoom { margin-left: 14px; width: 30px; }
.st-fit { margin-left: 15px; }
```
